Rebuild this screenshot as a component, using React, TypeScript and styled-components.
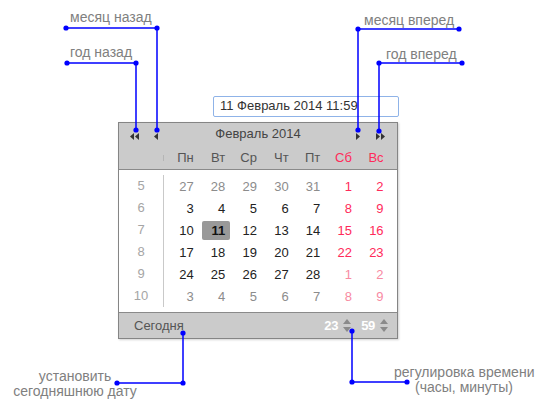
import React from "react";
import styled, { createGlobalStyle } from "styled-components";

const GlobalStyle = createGlobalStyle`
  html, body {
    margin: 0;
    padding: 0;
    background: #fff;
  }
  body {
    font-family: "Liberation Sans", Arial, sans-serif;
  }
`;

const Canvas = styled.div`
  position: relative;
  width: 536px;
  height: 399px;
  overflow: hidden;
  background: #fff;
`;

const Widget = styled.div`
  display: flex;
  flex-direction: column;
  width: 280px;
  margin-left: 118px;
  padding-top: 96px;
`;

const DateInput = styled.div`
  align-self: flex-end;
  box-sizing: border-box;
  width: 186px;
  height: 21px;
  margin-right: -1px;
  margin-bottom: 5px;
  padding-left: 6px;
  border: 1.5px solid #8fb3e8;
  border-radius: 2px;
  font-size: 13px;
  line-height: 18px;
  color: #333;
`;

const Calendar = styled.div`
  box-sizing: border-box;
  width: 280px;
  border: 1px solid #858585;
  background: #fff;
  box-shadow: 1px 1px 2px rgba(0, 0, 0, 0.18);
  font-size: 13px;
`;

const Header = styled.div`
  background: #cbcbcb;
  border-bottom: 1px solid #8a8a8a;
`;

const NavRow = styled.div`
  display: grid;
  grid-template-columns: 1fr auto 1fr;
  align-items: center;
  height: 22px;
  padding: 0 11px;
`;

const NavGroup = styled.div<{ $end?: boolean }>`
  display: flex;
  align-items: center;
  justify-content: ${(p) => (p.$end ? "flex-end" : "flex-start")};
  gap: ${(p) => (p.$end ? "15px" : "14px")};
  padding-top: 4px;
`;

const Title = styled.div`
  color: #444;
  line-height: 22px;
`;

const GridRow = styled.div`
  display: grid;
  grid-template-columns: 45px repeat(7, 31.67px);
`;

const DayNamesRow = styled(GridRow)`
  height: 24px;
  align-items: center;
`;

const WeekTick = styled.div`
  justify-self: end;
  width: 1px;
  height: 6px;
  margin-top: 2px;
  background: #b5b5b5;
`;

const DayName = styled.div<{ $weekend?: boolean }>`
  text-align: right;
  padding-right: 2px;
  color: ${(p) => (p.$weekend ? "#ff2a5a" : "#555")};
`;

const Body = styled.div`
  display: flex;
  padding: 5px 0;
`;

const WeekCol = styled.div`
  width: 44px;
  border-right: 1px solid #c9c9c9;
`;

const WeekNum = styled.div`
  height: 22px;
  line-height: 22px;
  text-align: center;
  color: #a5a5a5;
`;

const DaysGrid = styled.div`
  display: grid;
  grid-template-columns: repeat(7, 31.67px);
  grid-auto-rows: 22px;
`;

const DayCell = styled.div`
  text-align: right;
  line-height: 22px;
`;

const Day = styled.span<{ $color: string; $selected?: boolean }>`
  display: inline-block;
  box-sizing: border-box;
  min-width: 28px;
  height: 19px;
  line-height: 19px;
  margin-right: -3px;
  padding-right: 5px;
  border-radius: 2px;
  text-align: right;
  vertical-align: middle;
  color: ${(p) => p.$color};
  background: ${(p) => (p.$selected ? "#999" : "transparent")};
  font-weight: ${(p) => (p.$selected ? "bold" : "normal")};
`;

const Footer = styled.div`
  display: flex;
  align-items: center;
  justify-content: space-between;
  height: 25px;
  padding: 0 9px 0 15px;
  background: #cbcbcb;
  border-top: 1px solid #8a8a8a;
`;

const TodayButton = styled.div`
  color: #555;
`;

const TimeBox = styled.div`
  display: flex;
  align-items: center;
`;

const TimeValue = styled.span`
  color: #fff;
  font-weight: bold;
  letter-spacing: -0.3px;
`;

const Spinner = styled.svg`
  display: block;
  margin-left: 5px;
`;

const MinutesValue = styled(TimeValue)`
  margin-left: 10px;
`;

const Overlay = styled.svg`
  position: absolute;
  left: 0;
  top: 0;
  pointer-events: none;
`;

const Note = styled.div<{ $left: number; $top: number; $width?: number }>`
  position: absolute;
  left: ${(p) => p.$left}px;
  top: ${(p) => p.$top}px;
  width: ${(p) => (p.$width ? `${p.$width}px` : "auto")};
  text-align: center;
  font-size: 14px;
  line-height: 15px;
  color: #808080;
  white-space: nowrap;
`;

type DayInfo = { n: number; other: boolean; weekend: boolean; selected?: boolean };

const buildDays = (): DayInfo[] => {
  const list: number[][] = [
    [27, 28, 29, 30, 31, 1, 2],
    [3, 4, 5, 6, 7, 8, 9],
    [10, 11, 12, 13, 14, 15, 16],
    [17, 18, 19, 20, 21, 22, 23],
    [24, 25, 26, 27, 28, 1, 2],
    [3, 4, 5, 6, 7, 8, 9],
  ];
  const out: DayInfo[] = [];
  list.forEach((row, r) => {
    row.forEach((n, c) => {
      const other = (r === 0 && c < 5) || (r === 4 && c >= 5) || r === 5;
      out.push({ n, other, weekend: c >= 5, selected: r === 2 && n === 11 });
    });
  });
  return out;
};

const dayColor = (d: DayInfo) => {
  if (d.weekend) return d.other ? "#f88aa2" : "#ff2a5a";
  if (d.selected) return "#111";
  return d.other ? "#8c8c8c" : "#222";
};

function Arrow({ dir, double }: { dir: "left" | "right"; double?: boolean }) {
  const one = (x: number) =>
    dir === "left"
      ? `M${x + 4} 0 L${x} 3.5 L${x + 4} 7 Z`
      : `M${x} 0 L${x + 4} 3.5 L${x} 7 Z`;
  return (
    <svg width={double ? 10 : 5} height={7} viewBox={`0 0 ${double ? 10 : 5} 7`}>
      <path d={one(0)} fill="#333" />
      {double && <path d={one(5)} fill="#333" />}
    </svg>
  );
}

function SpinIcon() {
  return (
    <Spinner width={8} height={13} viewBox="0 0 8 13">
      <path d="M0 5 L4 0 L8 5 Z" fill="#8a8a8a" />
      <path d="M0 8 L4 13 L8 8 Z" fill="#8a8a8a" />
    </Spinner>
  );
}

const callouts: number[][][] = [
  [[66, 28], [157, 28], [157, 130]],
  [[67, 63], [136, 63], [136, 130]],
  [[459, 29], [358, 29], [358, 130]],
  [[462, 63], [379, 63], [379, 131]],
  [[117, 383], [183, 383], [183, 333]],
  [[407, 382], [352, 382], [352, 331]],
];

function Callouts() {
  return (
    <Overlay width={536} height={399}>
      {callouts.map((pts, i) => (
        <g key={i}>
          <polyline
            points={pts.map((p) => p.join(",")).join(" ")}
            fill="none"
            stroke="#0000ff"
            strokeWidth={1.5}
          />
          {pts.map((p, j) => (
            <circle key={j} cx={p[0]} cy={p[1]} r={2.6} fill="#0000ff" />
          ))}
        </g>
      ))}
    </Overlay>
  );
}

const dayNames = ["Пн", "Вт", "Ср", "Чт", "Пт", "Сб", "Вс"];
const weeks = [5, 6, 7, 8, 9, 10];

export default function App() {
  const days = buildDays();
  return (
    <Canvas>
      <GlobalStyle />
      <Widget>
        <DateInput>11 Февраль 2014 11:59</DateInput>
        <Calendar>
          <Header>
            <NavRow>
              <NavGroup>
                <Arrow dir="left" double />
                <Arrow dir="left" />
              </NavGroup>
              <Title>Февраль 2014</Title>
              <NavGroup $end>
                <Arrow dir="right" />
                <Arrow dir="right" double />
              </NavGroup>
            </NavRow>
            <DayNamesRow>
              <WeekTick />
              {dayNames.map((name, i) => (
                <DayName key={name} $weekend={i >= 5}>
                  {name}
                </DayName>
              ))}
            </DayNamesRow>
          </Header>
          <Body>
            <WeekCol>
              {weeks.map((w) => (
                <WeekNum key={w}>{w}</WeekNum>
              ))}
            </WeekCol>
            <DaysGrid>
              {days.map((d, i) => (
                <DayCell key={i}>
                  <Day $color={dayColor(d)} $selected={d.selected}>
                    {d.n}
                  </Day>
                </DayCell>
              ))}
            </DaysGrid>
          </Body>
          <Footer>
            <TodayButton>Сегодня</TodayButton>
            <TimeBox>
              <TimeValue>23</TimeValue>
              <SpinIcon />
              <MinutesValue>59</MinutesValue>
              <SpinIcon />
            </TimeBox>
          </Footer>
        </Calendar>
      </Widget>
      <Callouts />
      <Note $left={70} $top={10}>месяц назад</Note>
      <Note $left={70} $top={45}>год назад</Note>
      <Note $left={364} $top={13}>месяц вперед</Note>
      <Note $left={386} $top={47}>год вперед</Note>
      <Note $left={0} $top={369} $width={150}>
        установить
        <br />
        сегодняшнюю дату
      </Note>
      <Note $left={394} $top={365} $width={140}>
        регулировка времени
        <br />
        (часы, минуты)
      </Note>
    </Canvas>
  );
}
